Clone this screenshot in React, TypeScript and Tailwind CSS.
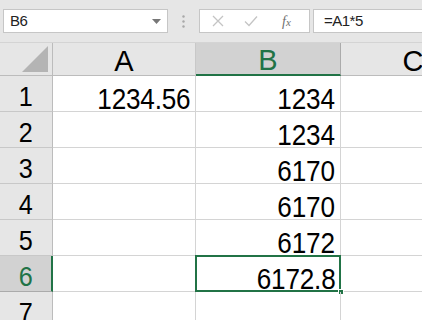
const cols = ['A', 'B', 'C'];

const rows: { n: number; a: string; b: string }[] = [
  { n: 1, a: '1234.56', b: '1234' },
  { n: 2, a: '', b: '1234' },
  { n: 3, a: '', b: '6170' },
  { n: 4, a: '', b: '6170' },
  { n: 5, a: '', b: '6172' },
  { n: 6, a: '', b: '6172.8' },
  { n: 7, a: '', b: '' },
];

const font = { fontFamily: '"Liberation Sans", Arial, sans-serif' };

// narrow digits like the gothic font in the original
const Num = ({ v, origin }: { v: string; origin: string }) => (
  <span className={`inline-block scale-x-[0.9] ${origin}`}>{v}</span>
);

export default function App() {
  return (
    <div className="w-[422px] h-[320px] overflow-hidden bg-white" style={font}>
      {/* formula bar */}
      <div className="h-[43px] bg-[#e6e6e6] flex items-start pt-[9px] pl-[3px] border-b border-[#d4d4d4]">
        <div className="w-[165px] h-[24px] bg-white border border-[#c6c6c6] flex items-center justify-between pl-[6px] pr-[6px]">
          <span className="text-[15px] text-[#222] tracking-[-0.5px]">B6</span>
          <svg width="9" height="5" viewBox="0 0 9 5">
            <path d="M0 0 L9 0 L4.5 5 Z" fill="#777" />
          </svg>
        </div>
        <div className="w-[31px] h-[24px] flex items-center justify-center">
          <svg width="3" height="13" viewBox="0 0 3 13">
            <circle cx="1.5" cy="1.5" r="1.2" fill="#a8a8a8" />
            <circle cx="1.5" cy="6.5" r="1.2" fill="#a8a8a8" />
            <circle cx="1.5" cy="11.5" r="1.2" fill="#a8a8a8" />
          </svg>
        </div>
        <div className="w-[111px] h-[24px] bg-white border border-[#c6c6c6] flex items-center pl-[12px] gap-[20px]">
          <svg width="12" height="12" viewBox="0 0 12 12">
            <path d="M1 1 L11 11 M11 1 L1 11" stroke="#c4c4c4" strokeWidth="1.3" />
          </svg>
          <svg width="14" height="12" viewBox="0 0 14 12">
            <path d="M1 6.5 L5 10.5 L13 1.5" stroke="#c4c4c4" strokeWidth="1.3" fill="none" />
          </svg>
          <span
            className="text-[14px] italic text-[#6f6f6f] ml-[4px]"
            style={{ fontFamily: '"Liberation Serif", "Times New Roman", serif' }}
          >
            f<span className="text-[11px]">x</span>
          </span>
        </div>
        <div className="ml-[3px] flex-1 h-[24px] bg-white border border-[#c6c6c6] border-r-0 flex items-center pl-[10px]">
          <span className="text-[15px] text-[#222] tracking-[-0.5px]">=A1*5</span>
        </div>
      </div>

      {/* sheet */}
      <div className="grid grid-cols-[53px_143px_145px_145px]">
        {/* header row */}
        <div className="h-[33px] bg-[#e6e6e6] border-r border-b border-[#bcbcbc] flex items-end justify-end pr-[4px] pb-[3px]">
          <svg width="26" height="26" viewBox="0 0 26 26">
            <path d="M26 0 L26 26 L0 26 Z" fill="#b4b4b4" />
          </svg>
        </div>
        {cols.map((c) => {
          const sel = c === 'B';
          return (
            <div
              key={c}
              className={`h-[33px] border-r flex items-center justify-center text-[29px] leading-none pt-[4px] ${
                sel
                  ? 'bg-[#d2d2d2] text-[#217346] border-[#ababab] border-b-2 border-b-[#217346]'
                  : 'bg-[#e6e6e6] text-black border-[#c8c8c8] border-b border-b-[#bcbcbc]'
              }`}
            >
              {c}
            </div>
          );
        })}

        {rows.map((r) => {
          const sel = r.n === 6;
          return [
            <div
              key={`h${r.n}`}
              className={`h-[36px] border-b flex items-end justify-center text-[28px] leading-[24px] pb-[2px] ${
                sel
                  ? 'bg-[#d2d2d2] text-[#217346] border-[#ababab] border-r-2 border-r-[#217346]'
                  : 'bg-[#e6e6e6] text-black border-[#c8c8c8] border-r border-r-[#bcbcbc]'
              }`}
            >
              <Num v={String(r.n)} origin="origin-center" />
            </div>,
            <div
              key={`a${r.n}`}
              className="h-[36px] border-r border-b border-[#d4d4d4] flex items-end justify-end pr-[5px] text-[29px] leading-[24px] tracking-[-0.2px] text-black"
            >
              {r.a && <Num v={r.a} origin="origin-right" />}
            </div>,
            <div
              key={`b${r.n}`}
              className="relative h-[36px] border-r border-b border-[#d4d4d4] flex items-end justify-end pr-[5px] text-[29px] leading-[24px] tracking-[-0.2px] text-black"
            >
              {r.b && <Num v={r.b} origin="origin-right" />}
              {sel && (
                <>
                  <div className="absolute left-[-1px] top-[-1px] right-[-1px] bottom-[-1px] border-2 border-[#217346]" />
                  <div className="absolute right-[-4px] bottom-[-4px] w-[6px] h-[6px] bg-[#217346] border border-white" />
                </>
              )}
            </div>,
            <div key={`c${r.n}`} className="h-[36px] border-r border-b border-[#d4d4d4]" />,
          ];
        })}
      </div>
    </div>
  );
}
